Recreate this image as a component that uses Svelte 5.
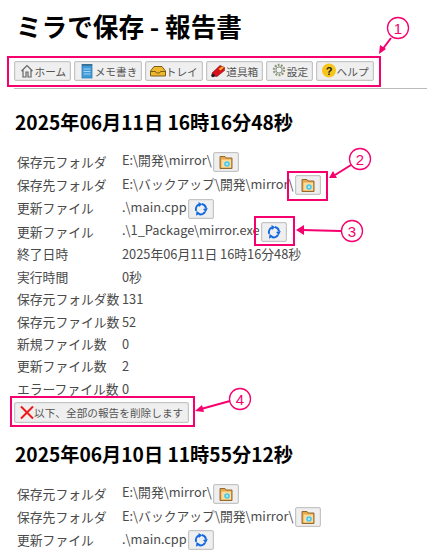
<script>
  const reports = [
    { title: '2025年06月11日 16時16分48秒', rows: [
      ['保存元フォルダ', 'E:\\開発\\mirror\\', 'folder'],
      ['保存先フォルダ', 'E:\\バックアップ\\開発\\mirror\\', 'folder'],
      ['更新ファイル', '.\\main.cpp', 'sync'],
      ['更新ファイル', '.\\1_Package\\mirror.exe', 'sync'],
      ['終了日時', '2025年06月11日 16時16分48秒'],
      ['実行時間', '0秒'],
      ['保存元フォルダ数', '131'],
      ['保存元ファイル数', '52'],
      ['新規ファイル数', '0'],
      ['更新ファイル数', '2'],
      ['エラーファイル数', '0']
    ], del: true },
    { title: '2025年06月10日 11時55分12秒', rows: [
      ['保存元フォルダ', 'E:\\開発\\mirror\\', 'folder'],
      ['保存先フォルダ', 'E:\\バックアップ\\開発\\mirror\\', 'folder'],
      ['更新ファイル', '.\\main.cpp', 'sync']
    ], del: false }
  ];
  const nav = [
    ['home', 'ホーム'], ['memo', 'メモ書き'], ['tray', 'トレイ'],
    ['tool', '道具箱'], ['gear', '設定'], ['help', 'ヘルプ']
  ];
  const callouts = [
    { x: 398, y: 28, n: 1 }, { x: 360, y: 159, n: 2 }, { x: 352, y: 231, n: 3 }, { x: 240, y: 399, n: 4 }
  ];
</script>

{#snippet icon(name)}
  <svg class="ico" viewBox="0 0 16 16" width="16" height="16" aria-hidden="true">
    {#if name === 'home'}
      <path d="M2.500 8 8 2.500 13.500 8M4 6.500V14h3V9h2v5h3V6.500" fill="none" stroke="#666" stroke-width="1.200"/>
    {:else if name === 'memo'}
      <rect x="3" y="1.500" width="10" height="13.500" fill="#3f9ad6" stroke="#2f7fb8" stroke-width=".8"/>
      <path d="M4 1v2M6 1v2M8 1v2M10 1v2M12 1v2" stroke="#234" stroke-width=".7"/>
      <path d="M4.500 6h7M4.500 8.500h7M4.500 11h7" stroke="#bfe3f8" stroke-width=".8"/>
    {:else if name === 'tray'}
      <path d="M.500 8 4 3.500h8L15.500 8v5H.500z" fill="#eeb830" stroke="#6b5310" stroke-width=".9"/>
      <path d="M1 8.500h4.500l1 1.500h3l1-1.500H15" fill="none" stroke="#6b5310" stroke-width=".9"/>
    {:else if name === 'tool'}
      <path d="M2 10 10 2.500l4.500 2v3l-7.500 6-4-.5z" fill="#d8121c" stroke="#8c0a10" stroke-width=".6"/>
      <path d="M8.500 6 12 3.500l2 1-3.500 3z" fill="#f2b02c"/>
      <circle cx="3" cy="12.500" r="1.800" fill="#222"/>
    {:else if name === 'gear'}
      <circle cx="8" cy="7" r="5" fill="none" stroke="#8a9a78" stroke-width="2.400" stroke-dasharray="1.800 1.300"/>
      <circle cx="8" cy="7" r="3.100" fill="#f4f4f4" stroke="#7f7f7f" stroke-width=".9"/>
    {:else if name === 'help'}
      <circle cx="8" cy="7.500" r="7" fill="#f7c61c"/>
      <text x="8" y="11.500" class="q">?</text>
    {:else if name === 'folder'}
      <path d="M2 2.500h5l1 1.500h6v10.500H2z" fill="#e8a848" stroke="#8a5f24" stroke-width=".9"/>
      <rect x="3.500" y="5.500" width="9.500" height="8" fill="#fbdca0"/>
      <circle cx="9" cy="10" r="2.800" fill="#48c8e8"/>
      <circle cx="9" cy="10" r="1.200" fill="#a8ecf8"/>
    {:else if name === 'sync'}
      <g fill="none" stroke="#1468e0" stroke-width="2">
        <path d="M3.200 9.800a5 5 0 0 1 2.800-6.300"/>
        <path d="M8.800 3a5 5 0 0 1 4.100 4.500"/>
        <path d="M12 10.800a5 5 0 0 1-6.300 2.200"/>
      </g>
      <path d="M5.500 1 9.200 3.200 5.800 6zM14.800 7 12.800 11.200 10 8zM3 14.800 3.500 10l3.700 2.200z" fill="#1468e0"/>
    {:else if name === 'cross'}
      <path d="M3 2.500 15 14.500M15 2.500 3 14.500" stroke="#f01818" stroke-width="2"/>
    {/if}
  </svg>
{/snippet}

<div class="page">
  <h1>ミラで保存 - 報告書</h1>
  <nav class="nav">
    {#each nav as [ic, label]}
      <button class="btn">{@render icon(ic)}{label}</button>
    {/each}
  </nav>
  <hr />

  {#each reports as r}
    <section class="report">
      <h2>{r.title}</h2>
      <table>
        <tbody>
          {#each r.rows as [k, v, b]}
            <tr class:tall={b}>
              <td class="k">{k}</td>
              <td class="v">{v}{#if b}<button class="btn sq">{@render icon(b)}</button>{/if}</td>
            </tr>
          {/each}
        </tbody>
      </table>
      {#if r.del}
        <button class="btn del">{@render icon('cross')}以下、全部の報告を削除します</button>
      {/if}
    </section>
  {/each}

  <svg class="marks" width="427" height="551" viewBox="0 0 427 551" aria-hidden="true">
    <g fill="none" stroke="#f5006e" stroke-width="2">
      <rect x="8" y="57" width="372" height="29"/>
      <rect x="288" y="172" width="39" height="28"/>
      <rect x="255" y="217" width="39" height="28"/>
      <rect x="11" y="397" width="183" height="29"/>
      <path d="M351 165 335 175M341 231 302 230M230 401 201 409M391 38 382 50"/>
    </g>
    <path fill="#f5006e" d="M379 54 380 45 386 49zM329 178 333 171 337 178zM296 230 304 225V235zM195 411 202 405 204 412z"/>
    {#each callouts as c}
      <circle cx={c.x} cy={c.y} r="10.500" fill="#fff" stroke="#f5006e" stroke-width="1.300"/>
      <text x={c.x} y={c.y + 5.500} class="num">{c.n}</text>
    {/each}
  </svg>
</div>

<style>
  :global(body) {
    margin: 0;
    background: #fff;
  }
  .page {
    position: relative;
    width: 427px;
    height: 551px;
    overflow: hidden;
    padding-left: 14px;
    box-sizing: border-box;
    font-family: "Noto Sans CJK JP", "Noto Sans", sans-serif;
    color: #4a4a4a;
    font-size: 12.8px;
  }
  h1 {
    margin: 0;
    padding: 7px 0 0 2px;
    font-size: 25.6px;
    line-height: 38px;
    font-weight: 700;
    color: #000;
  }
  .nav {
    display: flex;
    gap: 3px;
    margin-top: 16px;
  }
  .btn {
    display: inline-flex;
    align-items: center;
    justify-content: center;
    box-sizing: border-box;
    height: 20px;
    padding: 0 4px 0 3.500px;
    background: #efefef;
    border: 1px solid #c4c4c4;
    box-shadow: inset 0 0 0 .5px #ddd;
    border-radius: 2px;
    font-family: inherit;
    font-size: 10.67px;
    color: #555;
    white-space: nowrap;
  }
  .ico {
    flex: none;
  }
  hr {
    margin: 7px 0 0;
    border: 0;
    border-top: 1px solid #bbb;
  }
  h2 {
    margin: 0;
    padding: 18px 0 0 1px;
    font-size: 19.2px;
    line-height: 30px;
    font-weight: 700;
    color: #000;
  }
  table {
    border-collapse: collapse;
    margin: 13px 0 0 3px;
  }
  td {
    padding: 0;
    height: 22.400px;
    line-height: 18px;
    white-space: nowrap;
    vertical-align: middle;
  }
  tr.tall td {
    height: 23.300px;
  }
  .k {
    width: 105px;
  }
  .btn.sq {
    width: 26px;
    padding: 0;
    margin-left: 1.500px;
    vertical-align: middle;
  }
  .btn.del {
    margin-top: 2px;
    height: 21px;
    width: 175px;
    display: flex;
    justify-content: flex-start;
    padding: 0 0 0 3px;
  }
  .report + .report h2 {
    padding-top: 16px;
  }
  .marks {
    position: absolute;
    left: 0;
    top: 0;
    pointer-events: none;
  }
  .num {
    font-family: "Liberation Sans", sans-serif;
    font-size: 15px;
    fill: #f5006e;
    text-anchor: middle;
  }
  .q {
    font-family: "Liberation Sans", sans-serif;
    font-size: 11px;
    font-weight: 700;
    fill: #222;
    text-anchor: middle;
  }
</style>
